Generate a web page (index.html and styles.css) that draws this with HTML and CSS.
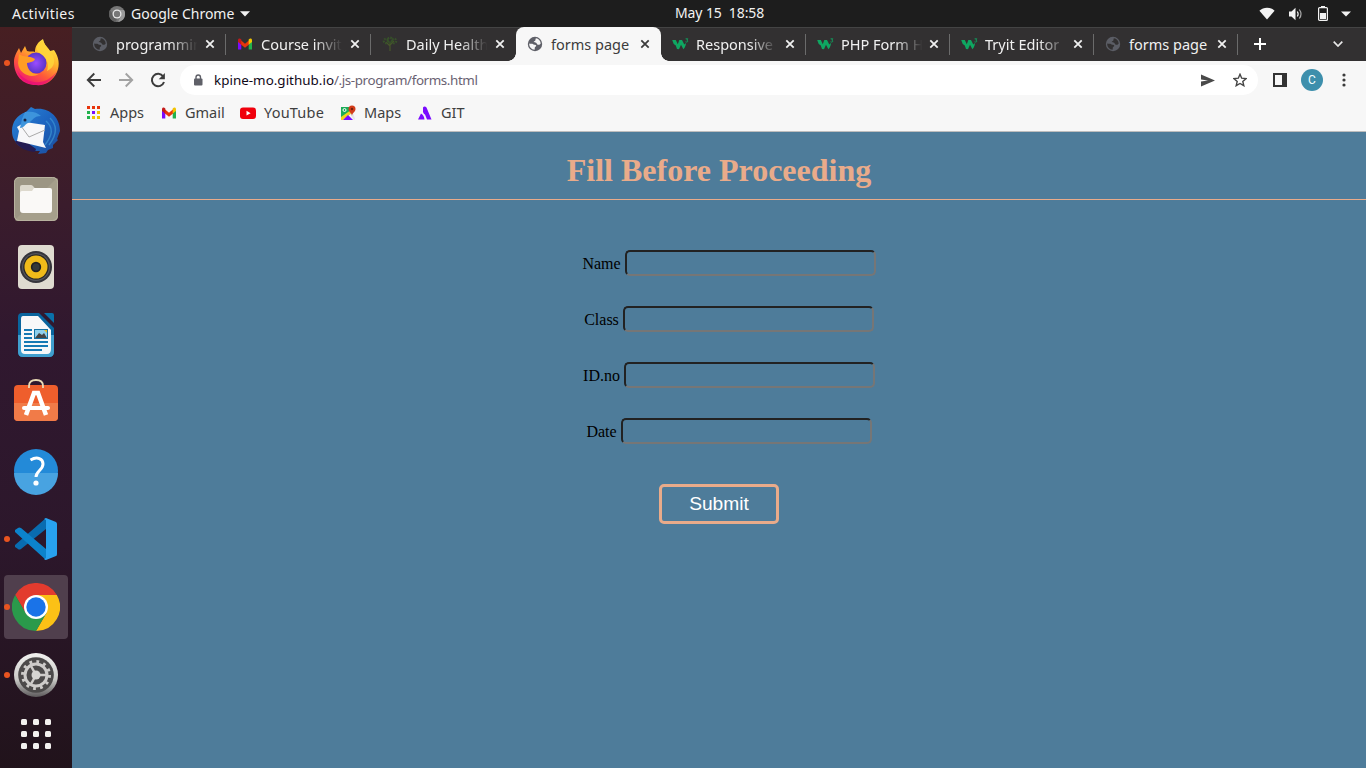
FILE: index.html
```html
<!DOCTYPE html>
<html lang="en">
<head>
<meta charset="utf-8">
<title>forms page</title>
<link rel="stylesheet" href="styles.css">
</head>
<body>
<svg class="defs" width="0" height="0">
  <defs>
    <symbol id="globe" viewBox="0 0 16 16"><circle cx="8" cy="8" r="7.200" fill="currentColor"/><path class="land" d="M9 2.300C11.500 2.700 13.600 4.900 13.700 7.500c-.6 1.300-2.300 1.600-3.300 1C9.500 8 9.900 7 9 6.800c-.9-.2-2 .1-2.200-.7-.2-.9 1.100-1 1.500-1.600C8.800 3.900 8.200 3 9 2.300zM2.200 7.500c1.300.4 3-.2 4 .8.900.9 2.600.2 3 1.200.4 1-1.100 1.100-1.400 2-.2.700.2 1.600-.3 2.200C4.500 13.600 2 11 2.200 7.500z"/></symbol>
    <symbol id="gmail" viewBox="0 0 16 16"><path fill="#7a0cff" d="M1 4v9.500h3.300V6.500z"/><path fill="#22b14c" d="M15 4v9.500h-3.300V6.500z"/><path fill="#e8350c" d="M3 3.400l5 4.300 5-4.300v4.400l-5 4-5-4z"/><path fill="#c41a1a" d="M1 4.500C1 2.400 2.800 2 4.300 3.400v5L1 6z"/><path fill="#f2c400" d="M15 4.500c0-2.100-1.800-2.500-3.300-1.100v5L15 6z"/></symbol>
    <symbol id="w3" viewBox="0 0 17 16"><path fill="#0fa661" d="M.2 4h3.600l2 4.300L7.300 4H10l2.300 4.600 1.500-1.600c.3 1.700-.5 4.500-2.400 6.200L9 8.800 7 13.200 5 13 3.800 9.500 1.700 8z"/><path fill="none" stroke="#0fa661" stroke-width=".9" d="M13.600 2.800h2.200l-1 1.300c1.400.2 1.200 2-.1 2l-1.200-.3"/></symbol>
    <symbol id="x" viewBox="0 0 10 10"><path d="M1.300 1.300l7.400 7.400M8.700 1.300L1.300 8.700" stroke="currentColor" stroke-width="1.800"/></symbol>
    <linearGradient id="ffBody" x1=".8" y1="0" x2=".2" y2="1"><stop offset="0" stop-color="#fff14a"/><stop offset=".35" stop-color="#ffb52c"/><stop offset=".65" stop-color="#ff5a38"/><stop offset="1" stop-color="#ee0b80"/></linearGradient>
    <radialGradient id="ffOrb"><stop offset="0" stop-color="#9a4dff"/><stop offset="1" stop-color="#5a35c8"/></radialGradient>
    <linearGradient id="tb" x1="0" y1="0" x2="1" y2="1"><stop offset="0" stop-color="#2b87d8"/><stop offset=".5" stop-color="#1d64c0"/><stop offset="1" stop-color="#1c4d9c"/></linearGradient>
    <linearGradient id="metal" x1="0" y1="0" x2="0" y2="1"><stop offset="0" stop-color="#f2f2f0"/><stop offset=".6" stop-color="#c9c9c6"/><stop offset="1" stop-color="#5d5a5c"/></linearGradient>
  </defs>
</svg>

<header class="topbar">
  <span class="t-act">Activities</span>
  <span class="t-app">
    <svg width="16" height="16" viewBox="0 0 16 16"><circle cx="8" cy="8" r="8" fill="#777"/><path fill="#9a9a9a" d="M8 4h7a8 8 0 0 1-6 12l3-6z"/><path fill="#606060" d="M1 4l4 6 3 2-1 4A8 8 0 0 1 1 4z"/><circle cx="8" cy="8" r="4.500" fill="#e8e8e8"/><circle cx="8" cy="8" r="3.200" fill="#777"/></svg>
    <span class="t-chrome">Google Chrome</span>
    <svg width="10" height="6" viewBox="0 0 10 6"><path d="M0 .3h10L5 5.500z" fill="#f2f2f2"/></svg>
  </span>
  <span class="t-clock">May 15&nbsp; 18:58</span>
  <span class="tray">
    <svg width="16" height="13" viewBox="0 0 16 13"><path d="M.4 3.700C4.500-.3 11.500-.3 15.600 3.700L8 12.500z" fill="#f2f2f2"/></svg>
    <svg width="16" height="14" viewBox="0 0 16 14"><path d="M1 4.500h2.500L7.500.7v12.600L3.500 9.500H1z" fill="#f2f2f2"/><path d="M9.300 4.500q1.700 2.500 0 5" stroke="#f2f2f2" stroke-width="1.200" fill="none"/><path d="M11.300 2.500q3.400 4.500 0 9" stroke="#aaa" stroke-width="1.200" fill="none"/></svg>
    <svg width="10" height="15" viewBox="0 0 10 15"><path d="M3 0h4v1H3z" fill="#f2f2f2"/><rect x=".6" y="1.600" width="8.800" height="12.800" rx="1" fill="none" stroke="#f2f2f2" stroke-width="1.200"/><path d="M2 7h6v6H2z" fill="#f2f2f2"/></svg>
    <svg width="10" height="6" viewBox="0 0 10 6"><path d="M0 .5h10L5 5.500z" fill="#f2f2f2"/></svg>
  </span>
</header>

<div class="desk">
<nav class="dock">
  <div class="app run"><svg viewBox="0 0 48 48"><path fill="url(#ffBody)" d="M2 23C2 17 5 13 7 9l2 5 4-7 2 5c3 1 6 0 8 1 0-6 3-10 8-13 1 6 5 8 7 12l4-1c5 7 6 15 3 22-4 9-12 14-21 13C10 46 2 36 2 23z"/><path d="M5 31c8 15 29 17 40 1-6 12-15 15-21 14C16 46 8 41 5 31z" fill="#e5067c" opacity=".6"/><circle cx="24" cy="24" r="10.500" fill="url(#ffOrb)"/><path fill="#ff9d25" d="M7 15c6 4 9 1 16 5-1 3-4 3-8 4 0 6 5 12 12 11-8 5-20 0-21-11z"/><path fill="#ffd43a" opacity=".9" d="M31 1c-8 6-8 10-2 14 7 5 8 11 6 17 9-4 9-13 3-20-4-4-6-7-7-11z"/></svg></div>
  <div class="app"><svg viewBox="0 0 48 48"><path fill="url(#tb)" d="M14 5l5-5 4 2c14-2 25 8 25 22l-3 8 1 1-5 5v3l-5 2-2 3-8 1 2-3C12 45 0 37 0 24 0 15 5 8 14 5z"/><path fill="#241b52" d="M3 34h10l11 8-1 3C13 44 6 40 3 34z"/><path fill="#f7f7f9" d="M5 20l8-5 20 3-2 17 3 6L5 34l2-10z"/><path fill="none" stroke="#aaa" stroke-width="1" d="M9 19l8 11 16-7"/><path fill="#3d94dc" d="M13 5c7-1 12 0 16 4-8 0-8 5-13 7-3 1-4 5-8 5l2-9z"/><path d="M34 14c9 8 5 16-1 24M38 11c9 9 6 18-1 27" fill="none" stroke="#48a9df" stroke-width="1.500" opacity=".5"/><circle cx="13" cy="13" r="1.500" fill="#182444"/></svg></div>
  <div class="app"><svg viewBox="0 0 48 48"><rect x="2" y="2" width="44" height="44" rx="5" fill="#9c9684"/><path d="M3 45L45 3q1 1 1 4v34q0 5-5 5H7q-3 0-4-1z" fill="#a59f8b"/><rect x="2.500" y="2.500" width="43" height="43" rx="5" fill="none" stroke="#b8b29f"/><path fill="#ddd9cd" d="M8 12q0-2 2-2h9q2 0 4 4v6H8z"/><path fill="#faf9f7" d="M8 18q0-2 2-2h10l2-3h16q2 0 2 2v20q0 3-3 3H11q-3 0-3-3z"/></svg></div>
  <div class="app"><svg viewBox="0 0 48 48"><rect x="6" y="2" width="36" height="44" rx="4" fill="#dfdbd0"/><circle cx="24" cy="24" r="16" fill="#35343a"/><circle cx="24" cy="24" r="14" fill="#55565d"/><circle cx="24" cy="24" r="12.800" fill="#2c2a26"/><circle cx="24" cy="24" r="11.500" fill="#f0bb1a"/><circle cx="24" cy="24" r="5.200" fill="#222"/><circle cx="24" cy="24" r="3.500" fill="#34393a"/></svg></div>
  <div class="app"><svg viewBox="0 0 48 48"><path fill="#09659e" d="M10 2h17l15 15v24q0 5-5 5H11q-5 0-5-5V6q0-4 4-4z"/><path fill="#409fce" d="M6 24h36v17q0 5-5 5H11q-5 0-5-5z"/><path fill="#f7f8f9" d="M11 5h15l13 14v19q0 5-4 5H13q-4 0-4-4V8q0-3 2-3z"/><path fill="#0a71aa" d="M32 2h8q2 0 2 2v8z"/><path stroke="#1579b4" stroke-width="2" d="M12 19h8M12 23h8M12 27h8M12 31h24M12 35h24M12 39h18"/><rect x="22.500" y="18.500" width="13" height="9" fill="#8ed0ed" stroke="#1472a4"/><path fill="#444" d="M23 27l4-5 3 2 2-2 3 5z"/><path fill="#e6bd24" d="M32 19h3v3z"/></svg></div>
  <div class="app"><svg viewBox="0 0 48 48"><rect x="2" y="6" width="44" height="36" rx="4" fill="#ef5e2c"/><path d="M2 24h44v14q0 4-4 4H6q-4 0-4-4z" fill="#f17b48"/><path fill="none" stroke="#eadbb6" stroke-width="1.800" d="M17 9V7q0-6 7-6t7 6v2"/><path fill="none" stroke="#fff" stroke-width="4.500" d="M14 36l8-22h4l8 22"/><path stroke="#fff" stroke-width="4" stroke-linecap="round" d="M12 29h24"/></svg></div>
  <div class="app"><svg viewBox="0 0 48 48"><circle cx="24" cy="24" r="22" fill="#238ad8"/><path fill="#48a3e1" d="M2 26h44a22 22 0 0 1-44 0z"/><path d="M18.500 13c7-4 12.500-1 12.500 4 0 6-7 7-7 13" fill="none" stroke="#fff" stroke-width="3"/><circle cx="24" cy="36" r="2.600" fill="#fff"/></svg></div>
  <div class="app run"><svg viewBox="0 0 48 48"><path fill="#096cb0" d="M3 30L34 3v11L9 34q-2 1-3 0l-3-2z"/><path fill="#0c83cb" d="M3 17L34 45V34L9 13q-2-1-3 0l-3 2z"/><path fill="#28a2ef" d="M34 3l10 4q1 1 1 2v30q0 2-1 2l-10 4q-1 0-2-1l2-1V5l-2-1z"/></svg></div>
  <div class="app run current"><svg viewBox="0 0 48 48"><path fill="#e33b2e" d="M3.200 12A24 24 0 0 1 44.800 12H24L13.600 30z"/><path fill="#fbc116" d="M44.800 12A24 24 0 0 1 24 48l10.400-18L24 12z"/><path fill="#2a9a4b" d="M3.200 12A24 24 0 0 0 24 48l10.400-18H13.600z"/><circle cx="24" cy="24" r="12" fill="#fff"/><circle cx="24" cy="24" r="9.700" fill="#1a73e8"/></svg></div>
  <div class="app run"><svg viewBox="0 0 48 48"><circle cx="24" cy="24" r="22" fill="url(#metal)"/><circle cx="24" cy="24" r="17.800" fill="#4c4a4a"/><circle cx="24" cy="24" r="13.500" fill="none" stroke="#ceccca" stroke-width="3" stroke-dasharray="2.800 4.269"/><circle cx="24" cy="24" r="11" fill="none" stroke="#ceccca" stroke-width="3"/><path stroke="#ceccca" stroke-width="2.500" d="M24 24h10M24 24l-5-9M24 24l-5 9"/><circle cx="24" cy="24" r="4.500" fill="#d6d5d3"/></svg></div>
  <div class="grid-launch"><i></i><i></i><i></i><i></i><i></i><i></i><i></i><i></i><i></i></div>
</nav>

<main class="browser">
  <div class="tabs">
    <div class="tab dim"><svg class="fav"><use href="#globe"/></svg><span class="tt">programmin</span><svg class="close"><use href="#x"/></svg></div>
    <div class="tab"><svg class="fav"><use href="#gmail"/></svg><span class="tt">Course invit</span><svg class="close"><use href="#x"/></svg></div>
    <div class="tab nosep"><svg class="fav" viewBox="0 0 16 16"><path d="M8 15V7M8 10L4 6M8 9l4-4" stroke="#47552b" stroke-width="1.200"/><g fill="none" stroke="#37502a" stroke-width="2.200" stroke-dasharray="1.500 1"><circle cx="8" cy="4" r="2.300"/><circle cx="4" cy="5" r="2.200"/><circle cx="12" cy="5" r="2.200"/></g></svg><span class="tt">Daily Health</span><svg class="close"><use href="#x"/></svg></div>
    <div class="tab active"><svg class="fav"><use href="#globe"/></svg><span class="tt">forms page</span><svg class="close"><use href="#x"/></svg></div>
    <div class="tab"><svg class="fav w3"><use href="#w3"/></svg><span class="tt">Responsive</span><svg class="close"><use href="#x"/></svg></div>
    <div class="tab"><svg class="fav w3"><use href="#w3"/></svg><span class="tt">PHP Form H</span><svg class="close"><use href="#x"/></svg></div>
    <div class="tab"><svg class="fav w3"><use href="#w3"/></svg><span class="tt">Tryit Editor</span><svg class="close"><use href="#x"/></svg></div>
    <div class="tab dim"><svg class="fav"><use href="#globe"/></svg><span class="tt">forms page</span><svg class="close"><use href="#x"/></svg></div>
    <svg class="plus" viewBox="0 0 12 12"><path d="M6 0v12M0 6h12" stroke="#fff" stroke-width="2"/></svg>
    <svg class="chev" viewBox="0 0 10 6"><path d="M.7.700L5 5 9.300.7" fill="none" stroke="#e8e8e8" stroke-width="1.700"/></svg>
  </div>

  <div class="toolbar">
    <svg class="nav" viewBox="0 0 16 16"><path d="M15 8H2M8.300 1.500L1.800 8l6.500 6.500" fill="none" stroke="#3c3c3c" stroke-width="1.900"/></svg>
    <svg class="nav" viewBox="0 0 16 16"><path d="M1 8h13M7.700 1.500L14.200 8l-6.500 6.500" fill="none" stroke="#a2a2a2" stroke-width="1.900"/></svg>
    <svg class="nav" viewBox="0 0 16 16"><path d="M13.200 4.500A6.200 6.200 0 1 0 14 10" fill="none" stroke="#3c3c3c" stroke-width="2"/><path d="M14.900 1v6.300H8.700z" fill="#3c3c3c"/></svg>
    <div class="omni">
      <svg class="lock" viewBox="0 0 10 12"><rect x="1" y="4.500" width="8.500" height="7" rx="1" fill="#5f6068"/><path d="M3 5V3.200a2.200 2.200 0 0 1 4.500 0V5" fill="none" stroke="#5f6068" stroke-width="1.400"/></svg>
      <span class="url"><b>kpine-mo.github.io</b>/.js-program/forms.html</span>
      <svg class="send" viewBox="0 0 14 13"><path d="M0 .5l14 6-14 6v-5l7-1-7-1z" fill="#4a4a4a"/></svg>
      <svg class="star" viewBox="0 0 14 14"><path d="M7 1.300l1.700 3.900 4.300.4-3.200 2.900 1 4.200L7 10.500l-3.800 2.200 1-4.200L1 5.600l4.300-.4z" fill="none" stroke="#454545" stroke-width="1.400"/></svg>
    </div>
    <svg class="panel" viewBox="0 0 14 14"><rect x="1" y="1" width="12" height="12" fill="none" stroke="#333" stroke-width="2"/><path d="M9 0h5v14H9z" fill="#333"/></svg>
    <span class="avatar">C</span>
    <svg class="dots" viewBox="0 0 4 14"><g fill="#3b3b3b"><circle cx="2" cy="2" r="1.600"/><circle cx="2" cy="7" r="1.600"/><circle cx="2" cy="12" r="1.600"/></g></svg>
  </div>

  <div class="marks">
    <span class="mark m-apps"><svg viewBox="0 0 16 16"><path fill="#e8350c" d="M2 1h3v3H2zM7 1h3v3H7zM12 1h3v3h-3z"/><path fill="#22b14c" d="M2 6h3v3H2zM2 11h3v3H2z"/><path fill="#7a0cff" d="M7 6h3v3H7z"/><path fill="#efc000" d="M12 6h3v3h-3zM7 11h3v3H7zM12 11h3v3h-3z"/></svg><span>Apps</span></span>
    <span class="mark m-gmail"><svg><use href="#gmail"/></svg><span>Gmail</span></span>
    <span class="mark m-yt"><svg viewBox="0 0 16 16"><rect x="0" y="2.500" width="16" height="11.500" rx="3" fill="#f0000c"/><path fill="#fff" d="M6.500 5.800v4.800L10.600 8.200z"/></svg><span>YouTube</span></span>
    <span class="mark m-maps"><svg viewBox="0 0 16 16"><path fill="#1cad58" d="M1 2h9l3 5-12 8z"/><path fill="#f2d51b" d="M1 12L11 5l2 2L3 15H1z"/><path fill="#7a0cff" d="M3 15l5-5 5 5z"/><path fill="#e6e6e6" d="M10 9l3-1 2 6-1 1z"/><circle cx="4.500" cy="5" r="1.500" fill="none" stroke="#fff"/><path fill="#d33c19" d="M12 11c0-3-3.500-4-3.500-7a3.500 3.500 0 0 1 7 0C15.500 7 12 8 12 11z"/><circle cx="12" cy="4" r="1.200" fill="#74200e"/></svg><span>Maps</span></span>
    <span class="mark m-git"><svg viewBox="0 0 16 16"><path fill="#7a0cff" d="M6 2.500q1.500-2 3.500 0l5 12H10L8 9.500l-1-.5-1-2zM4 8.500q3 1.500 3.500 6H1z"/></svg><span>GIT</span></span>
  </div>

  <section class="page">
    <h1>Fill Before Proceeding</h1>
    <form>
      <div class="row"><label for="n">Name</label><input id="n"></div>
      <div class="row"><label for="c">Class</label><input id="c"></div>
      <div class="row"><label for="i">ID.no</label><input id="i"></div>
      <div class="row"><label for="d">Date</label><input id="d"></div>
      <button type="button">Submit</button>
    </form>
  </section>
</main>
</div>
</body>
</html>
```

FILE: styles.css
```css
* { box-sizing: border-box; }
body { margin: 0; width: 1366px; height: 768px; overflow: hidden; font: 14.500px "Noto Sans", "Open Sans", sans-serif; }
svg { display: block; flex: none; }
.defs { position: absolute; }
b { font-weight: inherit; }

.topbar { height: 27px; background: #1d1d1d; color: #f2f2f2; display: grid; grid-template-columns: 109px 566px 1fr auto; align-items: center; font-size: 14px; line-height: 26px; white-space: nowrap; }
.t-act { padding-left: 12px; letter-spacing: .45px; }
.t-app { display: flex; align-items: center; gap: 6px; }
.t-chrome { width: 103px; }
.t-clock { letter-spacing: -.1px; padding-bottom: 1px; }
.tray { display: flex; align-items: center; padding-right: 15px; }
.tray svg:nth-child(2) { margin-left: 13px; }
.tray svg:nth-child(3) { margin-left: 14px; }
.tray svg:nth-child(4) { margin-left: 13px; }

.desk { display: flex; height: 741px; }
.dock { width: 72px; padding-top: 4px; background: linear-gradient(#471f22 0, #3a1c2c 24%, #30182f 42%, #2c172b 70%, #21131b 100%); }
.app { height: 64px; margin: 0 4px 4px; border-radius: 4px; display: flex; align-items: center; justify-content: center; position: relative; }
.app svg { width: 48px; height: 48px; }
.app.current { background: #503f4d; }
.run::before { content: ""; position: absolute; left: 0; top: 29px; width: 6px; height: 6px; border-radius: 50%; background: #e95420; }
.grid-launch { display: grid; grid-template-columns: repeat(3, 6px); gap: 6px; padding: 8px 0 0 21px; }
.grid-launch i { height: 6px; border-radius: 1.500px; background: #f3f1ef; }

.browser { width: 1294px; display: flex; flex-direction: column; }
.tabs { --land: #323031; height: 34px; background: #323031; border-top: 1px solid #444; display: flex; padding-left: 9px; align-items: flex-start; color: #f0f0f0; }
.tab { width: 144px; height: 33px; display: flex; align-items: center; padding: 0 0 1px 11px; position: relative; }
.tab:nth-child(-n+5) { width: 145px; }
.tab::after { content: ""; position: absolute; right: 0; top: 6px; width: 1px; height: 21px; background: #6b6b6b; }
.tab.nosep::after, .tab.active::after { display: none; }
.fav { width: 16px; height: 16px; margin-right: 8px; }
.fav.w3 { width: 17px; margin-right: 7px; }
.dim .fav { color: #5b5d65; }
.land { fill: var(--land); }
.tt { width: 83px; white-space: nowrap; line-height: 22px; -webkit-mask-image: linear-gradient(90deg, #000 65%, transparent 98%); }
.close { width: 10px; height: 10px; margin-left: 6px; }
.tab:nth-child(n+6) .close { margin-left: 5px; }
.active { --land: #f7f7f7; background: #f7f7f7; color: #3c3c3c; border-radius: 8px 8px 0 0; margin-top: -1px; height: 34px; padding-bottom: 0; }
.active .fav { color: #5f6068; }
.active .tt, .tab:nth-child(8) .tt { -webkit-mask-image: none; }
.active::before { content: ""; position: absolute; left: -8px; right: -8px; bottom: 0; height: 8px; background: radial-gradient(circle at 0 0, transparent 7.500px, #f7f7f7 8px) 0 0 / 8px 8px no-repeat, radial-gradient(circle at 8px 0, transparent 7.500px, #f7f7f7 8px) 100% 0 / 8px 8px no-repeat; }
.plus { width: 12px; height: 12px; margin: 10px 0 0 16px; }
.chev { width: 10px; height: 6px; margin: 13px 23px 0 auto; }

.toolbar { height: 38px; background: #f7f7f7; display: flex; align-items: center; padding-left: 14px; }
.nav { width: 16px; height: 16px; margin-right: 16px; }
.omni { width: 1078px; height: 30px; margin-left: -2px; border-radius: 15px; background: #fff; display: flex; align-items: center; padding: 0 11px 0 13px; }
.lock { width: 10px; height: 12px; }
.url { font-size: 13.400px; letter-spacing: -.4px; margin-left: 11px; color: #6a6272; flex: 1; line-height: 22px; padding-bottom: 1px; white-space: nowrap; }
.url b { color: #100818; letter-spacing: .02px; }
.send { width: 14px; height: 13px; }
.star { width: 14px; height: 14px; margin-left: 18px; }
.panel { width: 14px; height: 14px; margin-left: 15px; }
.avatar { width: 22px; height: 22px; margin-left: 14px; border-radius: 50%; background: #3d8fac; color: #f4ffff; font: 12px/22px Roboto, sans-serif; text-align: center; }
.dots { width: 4px; height: 14px; margin-left: 19px; }
.marks { height: 33px; background: #f7f7f7; border-bottom: 1px solid #bdbdbd; display: flex; color: #3f3f3f; padding: 0 0 5px 13px; line-height: 22px; }
.mark { display: flex; align-items: center; gap: 8px; white-space: nowrap; }
.mark svg { width: 16px; height: 16px; }
.mark span { padding-bottom: 2px; }
.m-apps { width: 76px; gap: 9px; }
.m-gmail { width: 79px; }
.m-yt { width: 100px; letter-spacing: .2px; }
.m-maps { width: 77px; }

.page { flex: 1; background: #4e7c9a; font: 16px "Liberation Serif", serif; color: #000; text-align: center; }
h1 { margin: 0; height: 68px; padding-top: 20px; line-height: 37px; font-size: 32px; color: #e9ab8a; border-bottom: 1px solid #e9ab8a; }
form { padding-top: 50px; }
.row { height: 56px; padding-left: 20px; display: flex; justify-content: center; align-items: flex-start; gap: 4px; line-height: 26px; }
.row label { padding-top: 1px; }
.row input { width: 251px; height: 26px; padding: 0; background: transparent; border: 2px solid; border-color: #222 #767676 #767676 #222; border-radius: 5px; }
form button { display: block; width: 120px; height: 40px; margin: 10px auto 0; padding: 0; border: 3px solid #e9ab8a; border-radius: 5px; background: transparent; color: #fff; font: 19.200px "Liberation Sans", Arial, sans-serif; }
```
